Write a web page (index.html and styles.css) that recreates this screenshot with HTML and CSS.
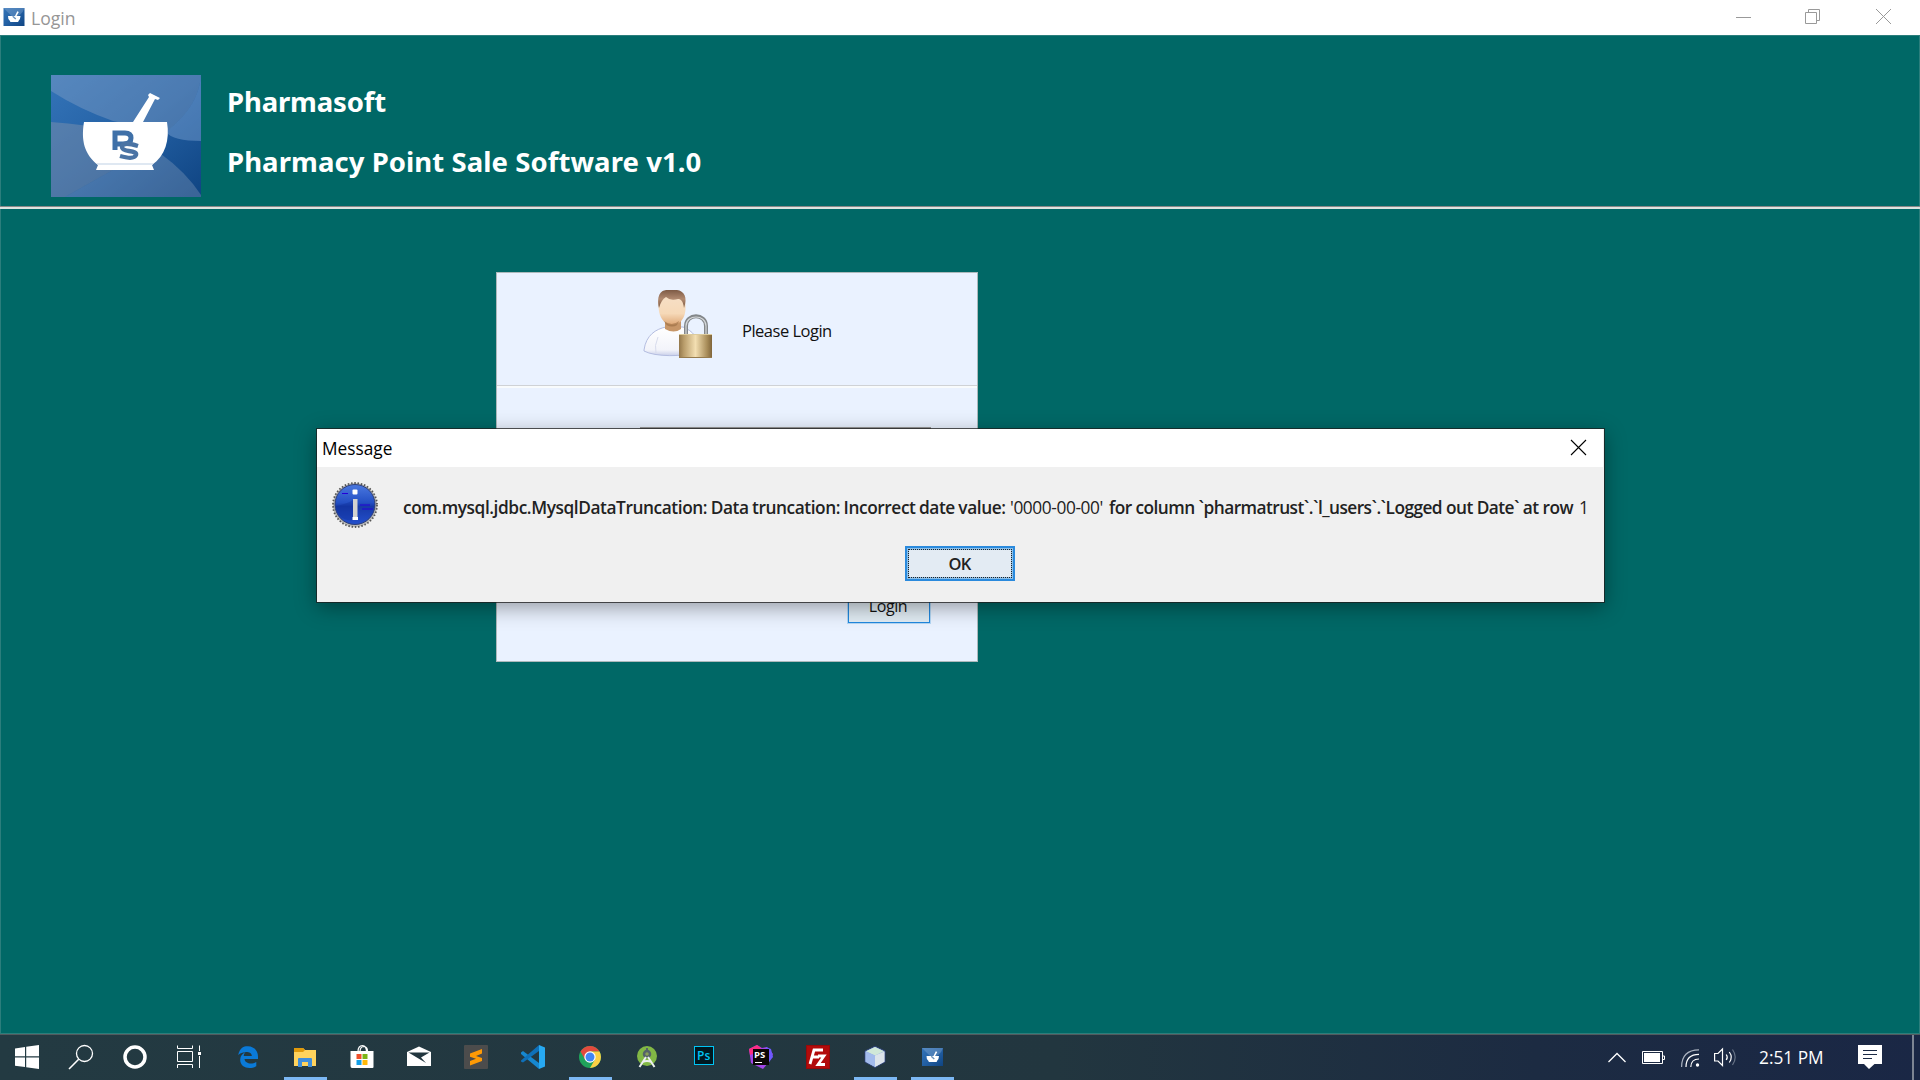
FILE: index.html
```html
<!DOCTYPE html>
<html lang="en">
<head>
<meta charset="utf-8">
<title>Login</title>
<link rel="stylesheet" href="styles.css">
</head>
<body>
<svg class="defs" width="0" height="0">
  <defs>
    <linearGradient id="blueBase" x1="0" y1="0" x2="1" y2="1"><stop offset="0" stop-color="#3474b8"/><stop offset=".5" stop-color="#2360a4"/><stop offset="1" stop-color="#0f4482"/></linearGradient>
    <linearGradient id="brass" x1="0" x2="1" y1="0" y2="0"><stop offset="0" stop-color="#94784b"/><stop offset=".15" stop-color="#b99d6b"/><stop offset=".5" stop-color="#f3dfb2"/><stop offset=".85" stop-color="#a88c59"/><stop offset="1" stop-color="#80653a"/></linearGradient>
    <linearGradient id="hair" x1="0" x2="0" y1="0" y2="1"><stop offset="0" stop-color="#7d5a45"/><stop offset=".5" stop-color="#b18a70"/><stop offset="1" stop-color="#7b563e"/></linearGradient>
    <linearGradient id="face" x1="0" x2="0" y1="0" y2="1"><stop offset="0" stop-color="#f6dfc6"/><stop offset=".6" stop-color="#f6d9b8"/><stop offset="1" stop-color="#dfa876"/></linearGradient>
    <linearGradient id="shirt" x1="0" x2="0" y1="0" y2="1"><stop offset="0" stop-color="#ffffff"/><stop offset=".8" stop-color="#f3f4fa"/><stop offset="1" stop-color="#c9d0ea"/></linearGradient>
    <linearGradient id="infoBlue" x1="0" x2="0" y1="0" y2="1"><stop offset="0" stop-color="#4a78e0"/><stop offset=".45" stop-color="#2450c4"/><stop offset=".55" stop-color="#173aa8"/><stop offset="1" stop-color="#2450cc"/></linearGradient>
    <symbol id="logo" viewBox="0 0 150 122">
      <rect width="150" height="122" fill="url(#blueBase)"/>
      <path d="M0 0H150C148 25 134 42 115 57L62 46Q28 34 0 16Z" fill="#8aa6c8" fill-opacity=".4"/>
      <path d="M150 0C148 25 134 42 115 57Q122 66 150 66Z" fill="#8ab0dc" fill-opacity=".4"/>
      <path d="M0 47Q35 49 65 57L110 79L62 95L14 122H0Z" fill="#8c98ac" fill-opacity=".42"/>
      <path d="M14 122L62 95L110 79Q135 97 150 120V122Z" fill="#a0b0c8" fill-opacity=".3"/>
      <path d="M33 47H116C119 65 114 81 101 90L103 95H45L47 90C33 79 30 65 33 47Z" fill="#fff"/>
      <path d="M82 47L98 22L97 20L99 18L109 23L107 25L104 24L92 47Z" fill="#fff"/>
      <path d="M46 89H102" stroke="#d5e1ee" stroke-width="1.5"/>
      <path d="M64 75V58H74Q80 58 80 63Q80 69 72 69H64" fill="none" stroke="#3f70a8" stroke-width="5"/>
      <path d="M87 71Q71 66 71 72Q71 75 78 76Q86 77 85 80Q83 85 69 81" fill="none" stroke="#4a73a4" stroke-width="4.4"/>
    </symbol>
    <symbol id="logo-small" viewBox="0 0 21 18">
      <rect width="21" height="18" fill="url(#blueBase)"/>
      <path d="M0 0H21Q18 9 9 9Z" fill="#a7c0de" fill-opacity=".3"/>
      <path d="M4.500 8H17Q17 11.500 14.800 13.200V14H6.700V13.200Q4.200 11.500 4.500 8ZM11.500 8L13.800 3.200L15.300 4L13 8Z" fill="#fff"/>
      <path d="M9.200 8.200L12.300 11" stroke="#6b93bd" stroke-width="1.400"/>
    </symbol>
  </defs>
</svg>

<div class="screen">
  <header class="titlebar">
    <svg class="app-icon" width="22" height="18"><use href="#logo-small"/></svg>
    <span class="app-title">Login</span>
    <div class="window-controls">
      <svg width="15" height="15"><path d="M0 8.500H15"/></svg>
      <svg width="15" height="15"><path d="M.5 3.500H11.500V14.500H.5ZM3.500 3.500V.5H14.500V11.500H11.500"/></svg>
      <svg width="15" height="15"><path d="M0 0L15 15M15 0L0 15"/></svg>
    </div>
  </header>

  <main class="client">
    <section class="banner">
      <svg class="logo" width="150" height="122"><use href="#logo"/></svg>
      <div class="banner-text">
        <h1>Pharmasoft</h1>
        <h2>Pharmacy Point Sale Software v1.0</h2>
      </div>
    </section>
    <section class="workspace">
      <form class="login-panel">
        <div class="login-head">
          <svg width="70" height="70" viewBox="0 0 70 70">
            <path d="M1 60C3 45 13 39 23 37H40C50 41 56 48 57 62C40 67 12 67 1 61Z" fill="url(#shirt)" stroke="#b4bde0" stroke-width="1"/>
            <path d="M15 47Q11 56 13 63" fill="none" stroke="#d8dced" stroke-width="1"/>
            <path d="M22 31H38V39Q31 44 22 39Z" fill="#c79668"/>
            <path d="M16 9C17 5 41 5 42 10C44 23 41 34 29 35C18 34 14 22 16 9Z" fill="url(#face)"/>
            <path d="M21 31Q29 37 36 31Q35 36.500 29 36.500Q23 36.500 21 31Z" fill="#8d6238" fill-opacity=".5"/>
            <path d="M16 18C13 4 19 0 24 0H34C41 1 45 7 41 18C40 11 38 9 35 9Q27 11 23 7Q18 10 16 18Z" fill="url(#hair)"/>
            <path d="M43 46V36C43 23 63 23 63 36V46" fill="none" stroke="#83878a" stroke-width="4"/>
            <path d="M43 45V36C43 24 63 24 63 36V45" fill="none" stroke="#d5d8da" stroke-width="1.200"/>
            <rect x="36" y="44" width="33" height="24" fill="url(#brass)"/>
            <path d="M36 44.500H69" stroke="#dccb9d"/><path d="M36 67.500H69" stroke="#967b4d"/>
          </svg>
          <span>Please Login</span>
        </div>
        <div class="login-body">
          <input class="field" type="text">
          <button class="login-button" type="button">Login</button>
        </div>
      </form>
    </section>
  </main>

  <footer class="taskbar">
    <nav class="system">
      <a><svg width="24" height="24"><path d="M0 3.500L10 2V11.300H0ZM11.200 1.800L24 0V11.300H11.200ZM0 12.500H10V22L0 20.700ZM11.200 12.500H24V24L11.200 22.200Z" fill="#fff"/></svg></a>
      <a><svg width="24" height="24" fill="none" stroke="#fff" stroke-width="1.300"><circle cx="15.500" cy="8.500" r="8"/><path d="M9.700 14.300L0 24" stroke-width="1.600"/></svg></a>
      <a><svg width="24" height="24"><circle cx="12" cy="12" r="10" fill="none" stroke="#fff" stroke-width="3.500"/></svg></a>
      <a><svg width="24" height="24" fill="none" stroke="#fff"><path d="M.5 .5V3.500H15.500V.5M.5 6.500H15.500V16.500H.5ZM.5 23V19.500H15.500V23M22.500 .5V6M22.500 11V23"/><path d="M21 7H24V10H21Z" fill="#fff" stroke="none"/></svg></a>
    </nav>
    <nav class="apps">
      <a><svg width="24" height="24"><path d="M2.200 10C4 1.500 9 1 12 1.200C18 1.500 22 5.500 22 11.500V14H8.500C9 18.800 16 19.600 20.300 17V21.300C13 25 4 22.500 4.200 14.500C4.300 11 6.500 8.500 9.200 7.300Q7.700 9 7.700 11H15.800C16 6.500 8 5.500 2.200 10Z" fill="#0a7ad8"/></svg></a>
      <a class="open"><svg width="24" height="24"><path d="M1 3H10L12 5H23V21H1Z" fill="#ffd35c"/><path d="M1 3H10L12 5L10 7H1Z" fill="#e09a0b"/><path d="M5 22V14Q5 13 6 13H18Q19 13 19 14V22H15V17H9V22Z" fill="#3f8edb"/></svg></a>
      <a><svg width="24" height="24"><path d="M.5 6H23.500V22Q23.500 23 22.500 23H2Q.5 23 .5 21Z" fill="#fff"/><path d="M8 7C8 3 10 .7 12.500 .7S16.500 3 16.500 7M10 7C10 3 12 1.500 14 1.500Q17.500 2 17.500 6" fill="none" stroke="#fff" stroke-width="1.200"/><path d="M6.500 9H11.500V14H6.500Z" fill="#f0502a"/><path d="M12.500 9H17.500V14H12.500Z" fill="#7cb518"/><path d="M6.500 15H11.500V20H6.500Z" fill="#129fe8"/><path d="M12.500 15H17.500V20H12.500Z" fill="#ffb90a"/></svg></a>
      <a><svg width="24" height="24"><path d="M0 7L12 1.500L24 7V21H0Z" fill="#fff"/><path d="M1.500 7.500H22.500L14 12.500L19 18Z" fill="#22363f"/></svg></a>
      <a><svg width="24" height="24"><rect width="24" height="24" rx="1" fill="#4c4c4c"/><path d="M6 8.500L18 4V8.500L12 11L18 13V16L6 20.500V16L12 13.700L6 11.800Z" fill="#ff9a05"/></svg></a>
      <a><svg width="24" height="24"><path d="M0 7.500L2 6L18 18V24L0 9Z" fill="#1687cf"/><path d="M0 15.500L18 0V6L2 17.500L0 16.500Z" fill="#0f70b8"/><path d="M18 0L24 2.500V21.500L18 24Z" fill="#27a9f2"/></svg></a>
      <a class="open"><svg width="24" height="24"><circle cx="12" cy="12" r="11" fill="#1fa35b"/><path d="M2.500 6.500A11 11 0 0 1 21.500 6.500H12L7.200 14.700Z" fill="#e14a3d"/><path d="M21.500 6.500A11 11 0 0 1 12 23L16.800 14.700L12 6.500Z" fill="#fdd045"/><circle cx="12" cy="12" r="5.700" fill="#fff"/><circle cx="12" cy="12" r="4.500" fill="#4286f5"/></svg></a>
      <a><svg width="24" height="24"><circle cx="12" cy="11" r="10" fill="#82b845"/><path d="M12 5V3" stroke="#56636a" stroke-width="2"/><circle cx="12" cy="9" r="3" fill="#8aa058" stroke="#55636a" stroke-width="2.500"/><path d="M11 12L4.500 22M13 12L19.500 22M7.500 17Q12 15 16.500 17" fill="none" stroke="#eceff0" stroke-width="2"/></svg></a>
      <a><svg width="24" height="24"><rect x="2.500" y="1.500" width="19" height="18" fill="#001820" stroke="#00c4f5"/><text x="5" y="14.500" class="glyph-ps">Ps</text></svg></a>
      <a><svg width="24" height="24"><path d="M0 4L8 0L13 3L18 2L24 9L20 17L14 24L2 18Z" fill="#a345e8"/><path d="M0 4L8 0L12 3L7 8L1 10Z" fill="#fb2d83"/><path d="M17 2L22 4L24 12L20 17Z" fill="#6d59ff"/><rect x="4" y="4" width="16" height="16" fill="#0b0707"/><text x="5" y="12.500" class="glyph-storm">PS</text><path d="M6 17.500H13" stroke="#fff"/></svg></a>
      <a><svg width="24" height="24"><rect width="24" height="24" fill="#b20b0b"/><rect x=".5" y=".5" width="23" height="23" fill="none" stroke="#790a0a" stroke-dasharray="1 1"/><path d="M4 19L8 5H17M6.500 12H13M12 11H18L12 19.500H19" fill="none" stroke="#fff" stroke-width="2.800"/></svg></a>
      <a class="open"><svg width="24" height="24"><path d="M12 1.200L22 6V17L12 22.500L2 17V6Z" fill="#93ade4" stroke="#2c3f70"/><path d="M12 2L21 6.200L12 10.500L3 6.200Z" fill="#d0e8d8"/><path d="M12 10.500L21.500 6.500V16.700L12 22Z" fill="#dce4ea"/><path d="M2.500 6.500L12 10.500V22L2.500 16.700Z" fill="#a2bbec"/></svg></a>
      <a class="open"><svg width="21" height="18"><use href="#logo-small"/></svg></a>
    </nav>
    <div class="tray">
      <svg width="18" height="12" fill="none" stroke="#fff" stroke-width="1.300"><path d="M.5 10L9 1.500L17.500 10"/></svg>
      <svg class="battery" width="23" height="13"><path d="M.5 .5H20.500V12.500H.5ZM21 5H22.500V8.500H21" fill="none" stroke="#fff"/><path d="M2 2H18V11H2Z" fill="#fff"/></svg>
      <svg class="wifi" width="19" height="18" fill="none" stroke="#fff" stroke-width="1.200"><path d="M.6 18Q.6 1 18 .8" stroke="#abb3c0"/><path d="M5 18Q5 5.500 18 5.400M9.800 18Q10 10 18 10"/><circle cx="16.500" cy="16" r="1.700" fill="#fff" stroke="none"/></svg>
      <svg class="speaker" width="22" height="19" fill="none" stroke="#fff" stroke-width="1.200"><path d="M.6 5.500H4L8.500 1V17.500L4 13H.6Z"/><path d="M12.200 6.500Q14.300 9.200 12.200 12M15.300 4Q19.200 9.200 15.300 14.500"/><path d="M18.500 1.500Q24 9.200 18.500 17" stroke="#667285"/></svg>
      <time>2:51 PM</time>
      <svg class="notes" width="24" height="24"><path d="M0 0H24V19H16.500L11 24L6 19H0Z" fill="#fff"/><path d="M5 5.500H19M5 9.500H19M5 13.500H14" stroke="#1b2a45"/></svg>
      <span class="show-desktop"></span>
    </div>
  </footer>

  <div class="dialog" role="dialog">
    <div class="dialog-title">
      <span>Message</span>
      <svg width="15" height="15"><path d="M0 0L15 15M15 0L0 15" stroke="#000" stroke-width="1.100"/></svg>
    </div>
    <div class="dialog-body">
      <div class="message">
        <svg width="46" height="48" viewBox="0 0 46 48">
          <circle cx="23" cy="24" r="22" fill="#b9b9b7"/>
          <circle cx="23" cy="24" r="22" fill="none" stroke="#555" stroke-width="1.800" stroke-dasharray="1.500 1.800"/>
          <circle cx="23" cy="23.500" r="20" fill="url(#infoBlue)" stroke="#2d3e78" stroke-width="1"/>
          <path d="M3.500 25Q15 23 21 19V39Q7 41 3.500 25Z" fill="#0f2f9c" fill-opacity=".4"/>
          <path d="M10 12.500H16M28 24H38M30 28H41" stroke="#2400d8" stroke-width="1.200"/>
          <rect x="20.500" y="8.500" width="5" height="5" rx="1" fill="#fff"/>
          <rect x="21" y="18" width="4.500" height="21" fill="#d2d2d0"/><path d="M20.500 37.500H26" stroke="#fff" stroke-width="3"/>
        </svg>
        <p>
          <span class="part lead">com.mysql.jdbc.MysqlDataTruncation: Data truncation: Incorrect date value:</span>
          <span class="part date">'0000-00-00'</span>
          <span class="part tail">for column `pharmatrust`.`l_users`.`Logged out Date` at row</span>
          <span class="part row">1</span>
        </p>
      </div>
      <button class="ok" type="button"><span>OK</span></button>
    </div>
  </div>
</div>
</body>
</html>
```
FILE: styles.css
```css
* { box-sizing: border-box; }
body { margin: 0; font-family: "Open Sans", "Noto Sans", sans-serif; color: #111; }
svg { display: block; flex: none; overflow: visible; }
.defs { position: absolute; }
h1, h2, p { margin: 0; }

.screen { position: relative; width: 1920px; height: 1080px; overflow: hidden; display: flex; flex-direction: column; background: #006866; }

.titlebar { height: 35px; flex: none; display: flex; align-items: flex-start; background: #fff; padding: 8px 24px 0 3px; }
.app-title { margin: -4px 0 0 6px; font-size: 17.6px; line-height: 28px; color: #969696; }
.window-controls { margin: 1px 5px 0 auto; display: flex; gap: 56px; }
.window-controls svg { fill: none; stroke: #999; stroke-width: 1; }
.window-controls svg:first-child { margin-right: -2px; }

.client { flex: 1; display: flex; flex-direction: column; border: 1px solid #2b7e7c; }
.banner { height: 173px; flex: none; display: flex; margin: 0 -1px; padding: 39px 0 0 51px; border-bottom: 2px solid #dde3e0; box-shadow: inset 0 -1px #888; }
.banner-text { margin-left: 26px; padding-top: 7px; color: #fff; font-family: "Noto Sans", sans-serif; }
.banner-text h1, .banner-text h2 { font-size: 27.5px; line-height: 40px; font-weight: 700; white-space: nowrap; }
.banner-text h1 { letter-spacing: -.15px; }
.banner-text h2 { margin-top: 20px; letter-spacing: .07px; }

.workspace { flex: 1; padding: 63px 0 0 495px; }
.login-panel { width: 482px; height: 390px; background: #eaf2ff; border: 1px solid #adb9bb; display: flex; flex-direction: column; }
.login-head { height: 113px; flex: none; display: flex; padding: 17px 0 0 146px; border-bottom: 1px solid #cfd2d6; box-shadow: 0 2px #f8fbfc; }
.login-head span { margin: 13px 0 0 29px; font-size: 16.5px; line-height: 56px; letter-spacing: -.5px; }
.login-body { flex: 1; display: flex; flex-direction: column; padding: 41px 47px 38px 143px; }
.field { width: 291px; height: 30px; border: 1px solid #999; border-top-width: 2px; background: #fff; padding: 0; }
.login-button { margin: auto 0 0 auto; width: 82px; height: 34px; padding: 0 2px 0 0; border: 1px solid #2088df; box-shadow: 0 0 0 1px #b3d7f5; background: #e1ecf4; font: 16px/30px "Open Sans", sans-serif; letter-spacing: -.4px; color: #111; }

.taskbar { height: 46px; flex: none; display: flex; border-top: 1px solid #53595d; background: linear-gradient(90deg, #233a42 0%, #22363f 55%, #1c2b42 80%, #1a2745 100%); }
.system, .apps { display: flex; }
.system a, .apps a { display: flex; align-items: center; justify-content: center; height: 45px; padding-bottom: 1px; }
.system a { width: 54px; }
.apps { margin-left: 3.5px; }
.apps a { width: 57px; }
.open { background: linear-gradient(#7cb8f4, #7cb8f4) center bottom / 43px 3px no-repeat; }
.glyph-ps { font: 600 12px "Open Sans", sans-serif; fill: #00c4f5; }
.glyph-storm { font: 700 9.500px "Open Sans", sans-serif; fill: #fff; }
.tray { margin-left: auto; display: flex; align-items: center; color: #fff; }
.battery { margin-left: 16px; }
.wifi { margin-left: 16px; }
.speaker { margin-left: 14px; }
.tray time { margin-left: 23px; width: 66px; font-size: 17.3px; line-height: 24px; white-space: nowrap; }
.notes { margin: 0 0 1px 33px; }
.show-desktop { width: 8px; height: 45px; margin-left: 30px; border-left: 2px solid #7d8593; }

.dialog { position: absolute; left: 317px; top: 429px; width: 1287px; height: 173px; background: #f0f0f0; box-shadow: 0 0 0 1px rgba(30,30,30,.75), 0 5px 20px rgba(0,0,0,.38); }
.dialog-title { height: 38px; display: flex; align-items: flex-start; justify-content: space-between; background: #fff; margin-right: 1px; padding: 11px 17px 0 5px; }
.dialog-title span { font-size: 17.3px; line-height: 24px; margin-top: -3px; color: #000; }
.dialog-body { display: flex; flex-direction: column; align-items: center; }
.message { align-self: stretch; display: flex; padding: 14px 0 0 15px; height: 79px; }
.message p { display: flex; margin-left: 25px; padding-top: 15px; font-size: 17.3px; line-height: 24px; white-space: nowrap; color: #222; }
.lead { width: 607px; font-weight: 600; letter-spacing: -.42px; word-spacing: -.6px; }
.date { width: 99px; letter-spacing: -.4px; }
.tail { width: 470px; font-weight: 600; letter-spacing: -.55px; }
.ok { width: 110px; height: 35px; padding: 2px; margin-right: 2px; border: 2px solid #2a8add; background: #e3ebf3; font: 600 16.5px/24px "Open Sans", sans-serif; color: #222; }
.ok span { display: block; height: 27px; line-height: 27px; outline: 1px dotted #222; letter-spacing: -.7px; box-shadow: 0 0 0 2px #8cbfe8; }
```
